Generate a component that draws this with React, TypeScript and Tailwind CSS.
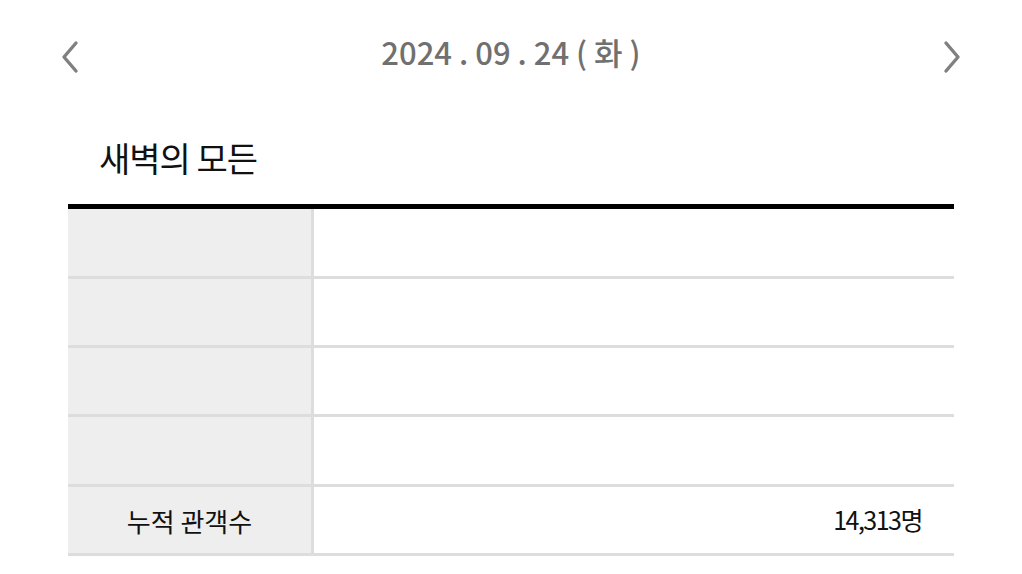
const ROWS = [
  { label: '', value: '', h: 'h-[70px]' },
  { label: '', value: '', h: 'h-[69px]' },
  { label: '', value: '', h: 'h-[69px]' },
  { label: '', value: '', h: 'h-[70px]' },
  { label: '누적 관객수', value: '14,313명', h: 'h-[69px]' },
];

function Chevron({ dir }: { dir: 'left' | 'right' }) {
  return (
    <svg width="20" height="34" viewBox="0 0 20 34" fill="none" className="text-[#808080]">
      <polyline
        points={dir === 'left' ? '16,3 4,17 16,31' : '4,3 16,17 4,31'}
        stroke="currentColor"
        strokeWidth="3.4"
        strokeLinecap="round"
        strokeLinejoin="round"
      />
    </svg>
  );
}

export default function App() {
  return (
    <div
      className="w-[1022px] h-[574px] bg-white overflow-hidden"
      style={{ fontFamily: '"Noto Sans CJK KR", "Noto Sans", sans-serif' }}
    >
      {/* date navigator */}
      <div className="flex items-center justify-between pl-[60px] pr-[60px] pt-[40px]">
        <Chevron dir="left" />
        <div className="text-[31px] font-medium text-[#707070] tracking-[0px] leading-none -mt-[12px]">
          2024 . 09 . 24 ( 화 )
        </div>
        <Chevron dir="right" />
      </div>

      {/* title */}
      <h1 className="pl-[99px] mt-[67px] text-[34px] leading-none text-[#111] tracking-[-1px]">
        새벽의 모든
      </h1>

      {/* info table */}
      <div className="ml-[68px] w-[886px] mt-[29px] border-t-[5px] border-black">
        {ROWS.map((row, i) => (
          <div key={i} className={`flex ${row.h} border-b-[3px] border-[#dddddd]`}>
            <div className="w-[246px] shrink-0 bg-[#eeeeee] border-r-[3px] border-[#dddddd] flex items-center justify-center text-[26px] text-[#111] tracking-[0px]">
              {row.label}
            </div>
            <div className="flex-1 flex items-center justify-end pr-[32px] text-[25px] text-[#111] tracking-[-1.5px]">
              {row.value}
            </div>
          </div>
        ))}
      </div>
    </div>
  );
}
